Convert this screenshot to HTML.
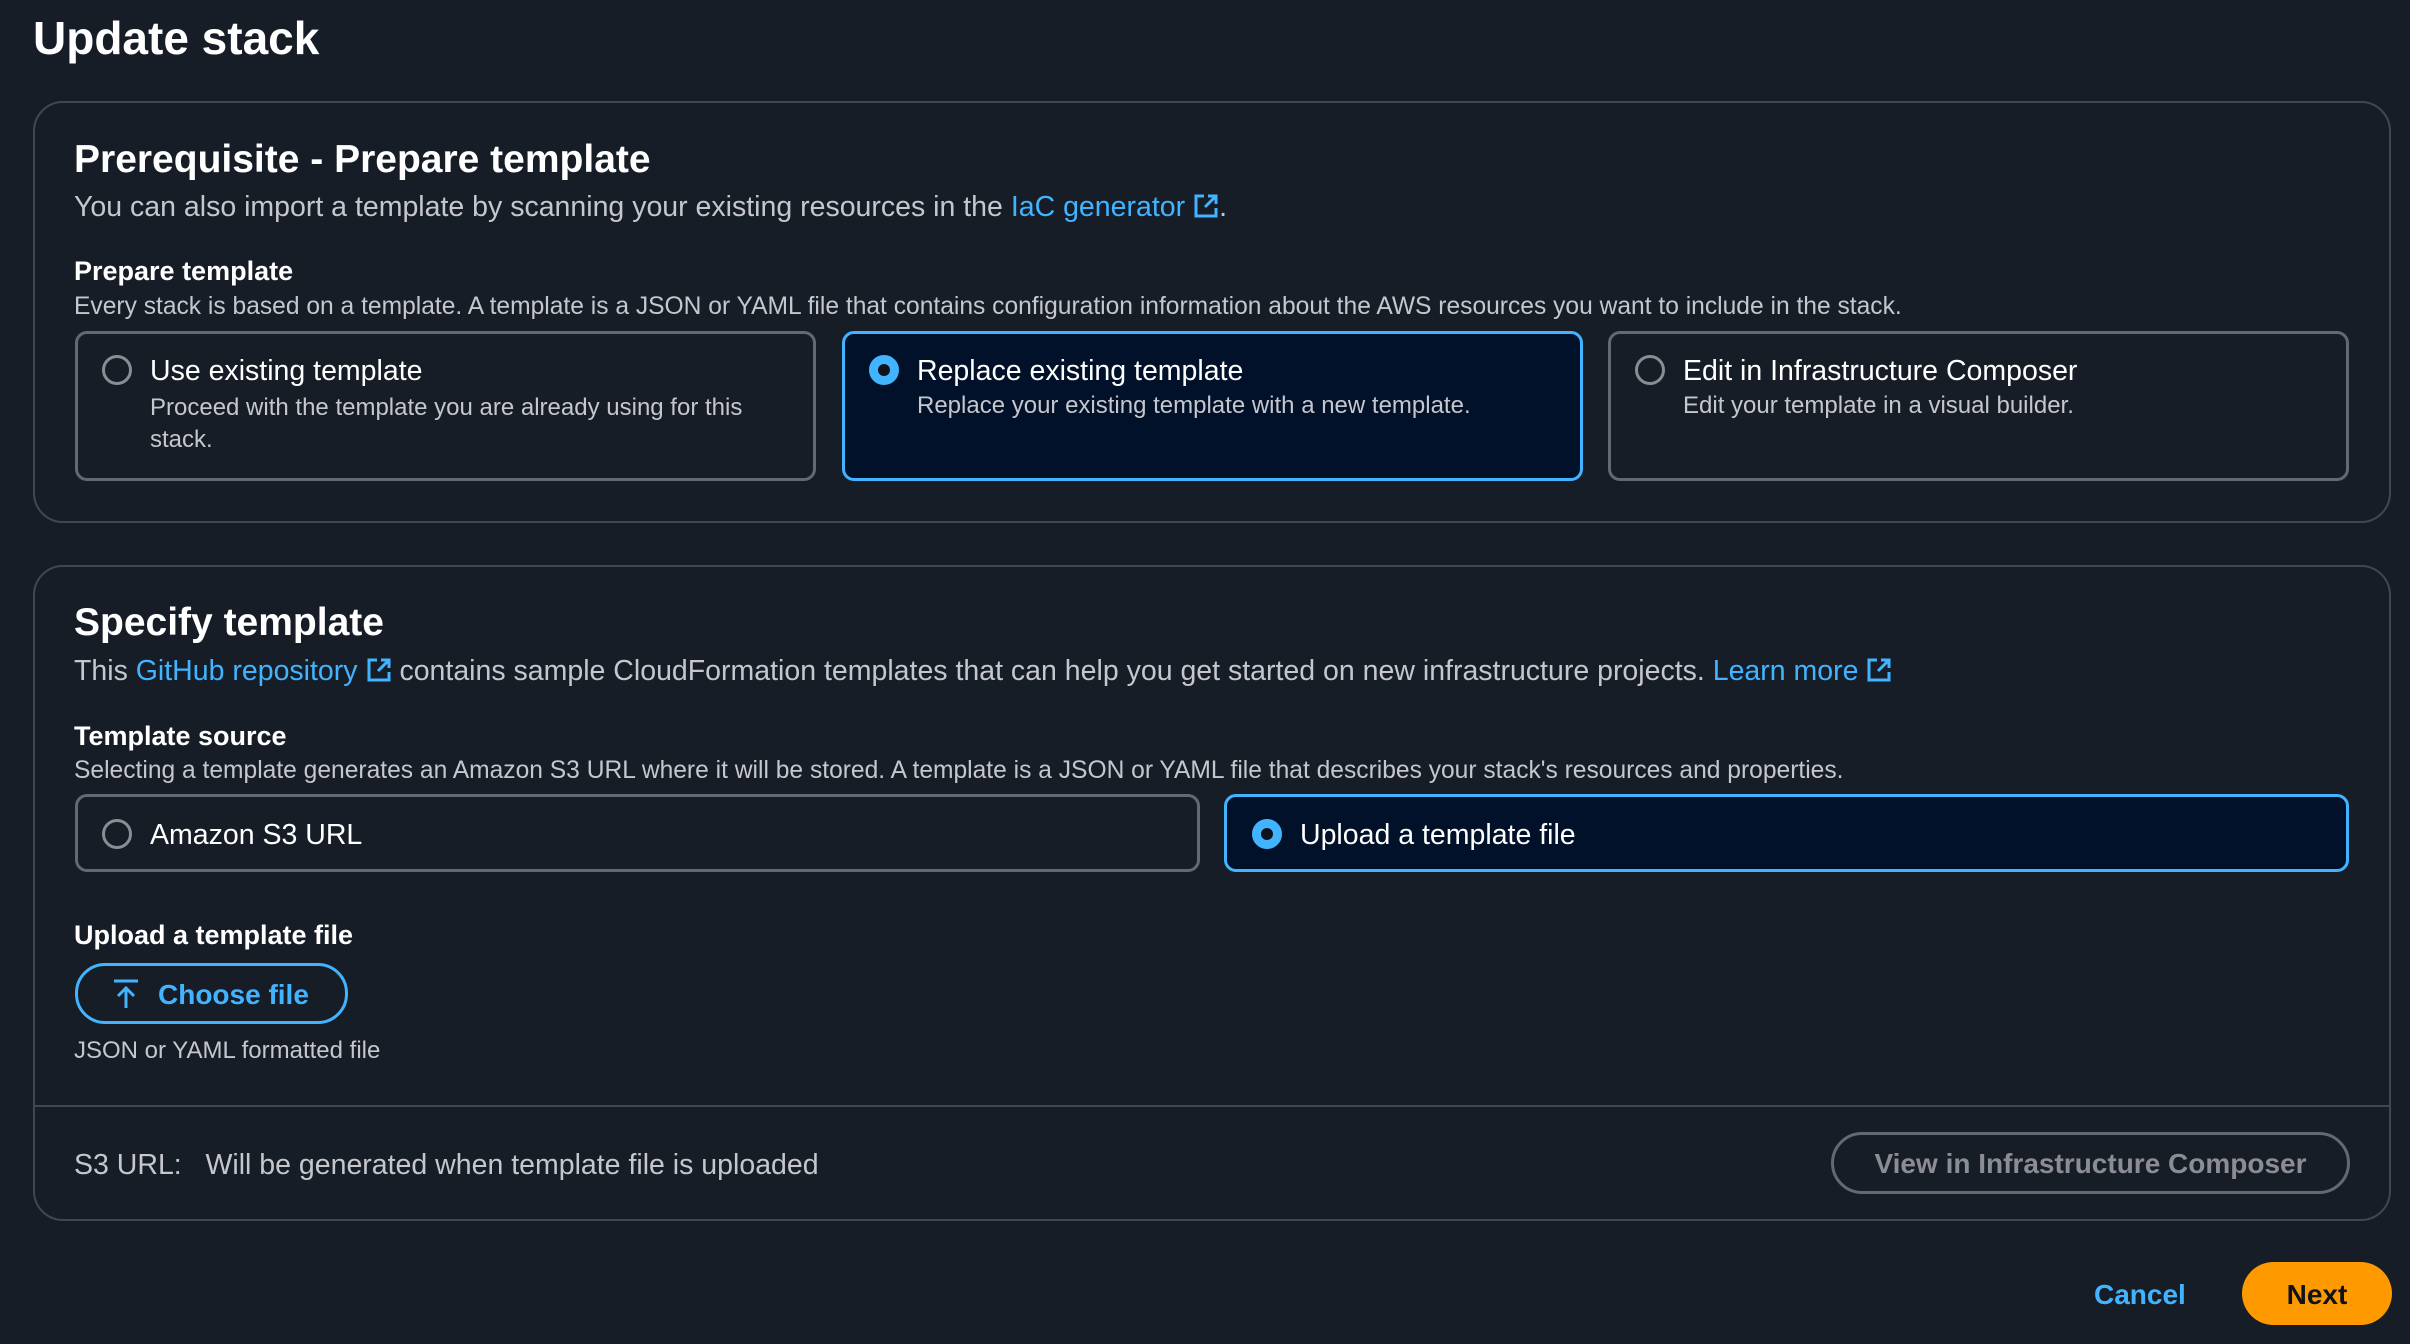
<!DOCTYPE html>
<html><head><meta charset="utf-8"><style>
*{margin:0;padding:0;box-sizing:border-box}
body{width:2410px;height:1344px;background:#161d27;font-family:"Liberation Sans",sans-serif;color:#c6c6cd;position:relative;overflow:hidden}
.a{position:absolute;white-space:nowrap}
.h1{font-size:46px;font-weight:bold;color:#fff}
.h2{font-size:39px;font-weight:bold;color:#fff}
.d{font-size:28.5px;color:#c6c6cd}
.l{font-size:27px;font-weight:bold;color:#fff}
.s{font-size:24.6px;color:#c6c6cd}
.box{position:absolute;border:2px solid #424650;border-radius:30px}
.tile{position:absolute;border:3px solid #656871;border-radius:12px}
.tile.sel{border-color:#42b4ff;background:#001129}
.r{position:absolute;width:30px;height:30px;border-radius:50%;border:3px solid #8c8c94}
.r.on{border:9px solid #42b4ff;background:#0f141a}
.tt{font-size:28.5px;color:#fff}
.ts{font-size:24px;color:#c6c6cd}
.lnk{color:#42b4ff}
.ext{display:inline-block;width:26px;height:26px;vertical-align:-3px;margin-left:8px}
</style></head><body>
<div class="a h1" style="left:33px;top:11px">Update stack</div>

<div class="box" style="left:33px;top:101px;width:2358px;height:422px"></div>
<div class="a h2" style="left:74px;top:138px">Prerequisite - Prepare template</div>
<div class="a d" style="left:74px;top:191px">You can also import a template by scanning your existing resources in the <span class="lnk">IaC generator<svg class="ext" viewBox="0 0 26 26"><path d="M11 3H3v20h20v-8M15 3h8v8M23 3L12 14" fill="none" stroke="#42b4ff" stroke-width="3"/></svg></span>.</div>
<div class="a l" style="left:74px;top:256px">Prepare template</div>
<div class="a s" style="left:74px;top:293px">Every stack is based on a template. A template is a JSON or YAML file that contains configuration information about the AWS resources you want to include in the stack.</div>

<div class="tile" style="left:75px;top:331px;width:741px;height:150px"></div>
<div class="r" style="left:102px;top:355px"></div>
<div class="a tt" style="left:150px;top:355px">Use existing template</div>
<div class="a ts" style="left:150px;top:392px;line-height:32px">Proceed with the template you are already using for this<br>stack.</div>

<div class="tile sel" style="left:842px;top:331px;width:741px;height:150px"></div>
<div class="r on" style="left:869px;top:355px"></div>
<div class="a tt" style="left:917px;top:355px">Replace existing template</div>
<div class="a ts" style="left:917px;top:392px">Replace your existing template with a new template.</div>

<div class="tile" style="left:1608px;top:331px;width:741px;height:150px"></div>
<div class="r" style="left:1635px;top:355px"></div>
<div class="a tt" style="left:1683px;top:355px">Edit in Infrastructure Composer</div>
<div class="a ts" style="left:1683px;top:392px">Edit your template in a visual builder.</div>

<div class="box" style="left:33px;top:565px;width:2358px;height:656px"></div>
<div class="a h2" style="left:74px;top:601px">Specify template</div>
<div class="a d" style="left:74px;top:655px">This <span class="lnk">GitHub repository<svg class="ext" viewBox="0 0 26 26"><path d="M11 3H3v20h20v-8M15 3h8v8M23 3L12 14" fill="none" stroke="#42b4ff" stroke-width="3"/></svg></span> contains sample CloudFormation templates that can help you get started on new infrastructure projects. <span class="lnk">Learn more<svg class="ext" viewBox="0 0 26 26"><path d="M11 3H3v20h20v-8M15 3h8v8M23 3L12 14" fill="none" stroke="#42b4ff" stroke-width="3"/></svg></span></div>
<div class="a l" style="left:74px;top:721px">Template source</div>
<div class="a s" style="left:74px;top:757px">Selecting a template generates an Amazon S3 URL where it will be stored. A template is a JSON or YAML file that describes your stack's resources and properties.</div>

<div class="tile" style="left:75px;top:794px;width:1125px;height:78px"></div>
<div class="r" style="left:102px;top:819px"></div>
<div class="a tt" style="left:150px;top:819px">Amazon S3 URL</div>
<div class="tile sel" style="left:1224px;top:794px;width:1125px;height:78px"></div>
<div class="r on" style="left:1252px;top:819px"></div>
<div class="a tt" style="left:1300px;top:819px">Upload a template file</div>

<div class="a l" style="left:74px;top:920px">Upload a template file</div>
<div style="position:absolute;left:75px;top:963px;width:273px;height:61px;border:3px solid #42b4ff;border-radius:30px"></div>
<svg class="a" style="left:110px;top:978px" width="32" height="32" viewBox="0 0 32 32"><path d="M4 3h24M16 30V10M8 18l8-8 8 8" fill="none" stroke="#42b4ff" stroke-width="3"/></svg>
<div class="a" style="left:158px;top:979px;font-size:28px;font-weight:bold;color:#42b4ff">Choose file</div>
<div class="a ts" style="left:74px;top:1037px">JSON or YAML formatted file</div>

<div style="position:absolute;left:34px;top:1105px;width:2356px;height:2px;background:#424650"></div>
<div class="a d" style="left:74px;top:1149px">S3 URL: &nbsp; Will be generated when template file is uploaded</div>
<div style="position:absolute;left:1831px;top:1132px;width:519px;height:62px;border:3px solid #656871;border-radius:31px"></div>
<div class="a" style="left:1831px;top:1148px;width:519px;text-align:center;font-size:28px;font-weight:bold;color:#8c8c94">View in Infrastructure Composer</div>

<div class="a" style="left:2094px;top:1279px;font-size:28px;font-weight:bold;color:#42b4ff">Cancel</div>
<div style="position:absolute;left:2242px;top:1262px;width:150px;height:63px;background:#ff9900;border-radius:32px"></div>
<div class="a" style="left:2242px;top:1279px;width:150px;text-align:center;font-size:28px;font-weight:bold;color:#0f141a">Next</div>
</body></html>
